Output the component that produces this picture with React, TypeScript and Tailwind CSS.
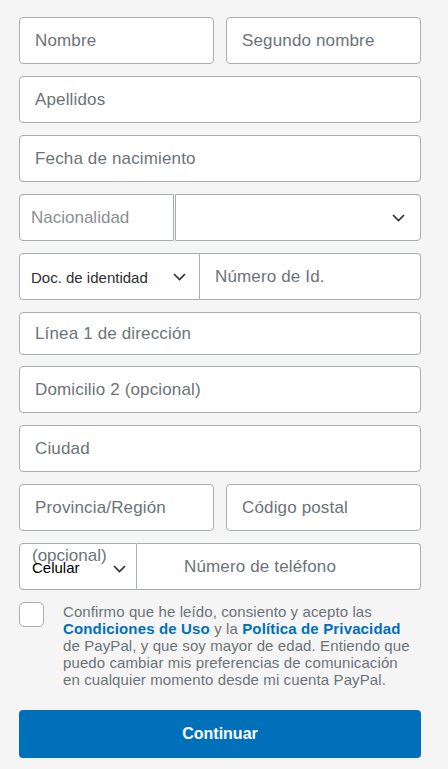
const font = { fontFamily: '"Liberation Sans", Arial, sans-serif' };

function Chevron({ className }: { className?: string }) {
  return (
    <svg className={className} width="13" height="8" viewBox="0 0 13 8" fill="none">
      <path d="M1 1l5.5 5.5L12 1" stroke="#2c2e2f" strokeWidth="1.6" />
    </svg>
  );
}

function Field({ label, h = "h-[47px]", className = "" }: { label: string; h?: string; className?: string }) {
  return (
    <div className={`${h} flex items-center rounded-[4px] border border-[#a9aeb1] bg-white pl-[15px] ${className}`}>
      <span className="text-[17px] tracking-[0.15px] text-[#6c7378]">{label}</span>
    </div>
  );
}

export default function App() {
  return (
    <div className="min-h-[769px] w-[448px] bg-[#f5f5f5] px-[19px] pt-[17px]" style={font}>
      <div className="flex w-[402px] flex-col">
        <div className="flex gap-3">
          <Field label="Nombre" className="w-[195px]" />
          <Field label="Segundo nombre" className="flex-1" />
        </div>

        <Field label="Apellidos" className="mt-3" />
        <Field label="Fecha de nacimiento" className="mt-3" />

        <div className="mt-3 flex h-[47px]">
          <div className="flex w-[155px] items-center rounded-l-[4px] border border-[#a9aeb1] bg-white pl-[11px]">
            <span className="text-[17px] text-[#8a8f93]">Nacionalidad</span>
          </div>
          <div className="ml-[1px] flex flex-1 items-center justify-end rounded-r-[4px] border border-[#a9aeb1] bg-white pr-[15px]">
            <Chevron />
          </div>
        </div>

        <div className="mt-3 flex h-[47px]">
          <div className="flex w-[181px] items-center rounded-l-[4px] border border-[#a9aeb1] bg-white pl-[11px] pr-[13px]">
            <span className="flex-1 pt-[3px] text-[15px] text-[#2c2e2f]">Doc. de identidad</span>
            <Chevron />
          </div>
          <div className="flex flex-1 items-center rounded-r-[4px] border border-l-0 border-[#a9aeb1] bg-white pl-[15px]">
            <span className="text-[17px] tracking-[0.15px] text-[#6c7378]">Número de Id.</span>
          </div>
        </div>

        <div className="mt-3 flex h-[43px] items-start rounded-[4px] border border-[#a9aeb1] bg-white pl-[15px] pt-[8px]">
          <span className="text-[17px] tracking-[0.15px] text-[#6c7378]">Línea 1 de dirección</span>
        </div>

        <Field label="Domicilio 2 (opcional)" className="mt-[11px]" />
        <Field label="Ciudad" className="mt-3" />

        <div className="mt-3 flex gap-3">
          <Field label="Provincia/Región" className="w-[195px]" />
          <Field label="Código postal" className="flex-1" />
        </div>

        <div className="mt-3 flex h-[47px]">
          <div className="relative flex w-[118px] items-center rounded-l-[4px] border border-[#a9aeb1] bg-white pl-[12px] pr-[10px]">
            <span className="absolute left-[12px] top-[-1px] text-[17px] text-[#6c7378]">(opcional)</span>
            <span className="relative flex-1 pt-[3px] text-[15px] text-black">Celular</span>
            <Chevron className="relative mt-[4px]" />
          </div>
          <div className="flex flex-1 items-center rounded-r-[4px] border border-l-0 border-[#a9aeb1] bg-white pl-[47px]">
            <span className="text-[17px] tracking-[0.15px] text-[#6c7378]">Número de teléfono</span>
          </div>
        </div>

        <div className="mt-3 flex gap-[19px]">
          <div className="h-[25px] w-[25px] shrink-0 rounded-[5px] border border-[#a9aeb1] bg-white" />
          <p className="whitespace-nowrap pt-[1px] text-[15px] leading-[17px] tracking-[0.1px] text-[#6c7378]">
            Confirmo que he leído, consiento y acepto las
            <br />
            <span className="font-bold tracking-[0.15px] text-[#0070ba]">Condiciones de Uso</span> y la{" "}
            <span className="font-bold tracking-[0.15px] text-[#0070ba]">Política de Privacidad</span>
            <br />
            de PayPal, y que soy mayor de edad. Entiendo que
            <br />
            puedo cambiar mis preferencias de comunicación
            <br />
            en cualquier momento desde mi cuenta PayPal.
          </p>
        </div>

        <button className="mt-[22px] h-[48px] w-full rounded-[4px] bg-[#0070ba] text-[16px] font-bold text-white">
          Continuar
        </button>
      </div>
    </div>
  );
}
